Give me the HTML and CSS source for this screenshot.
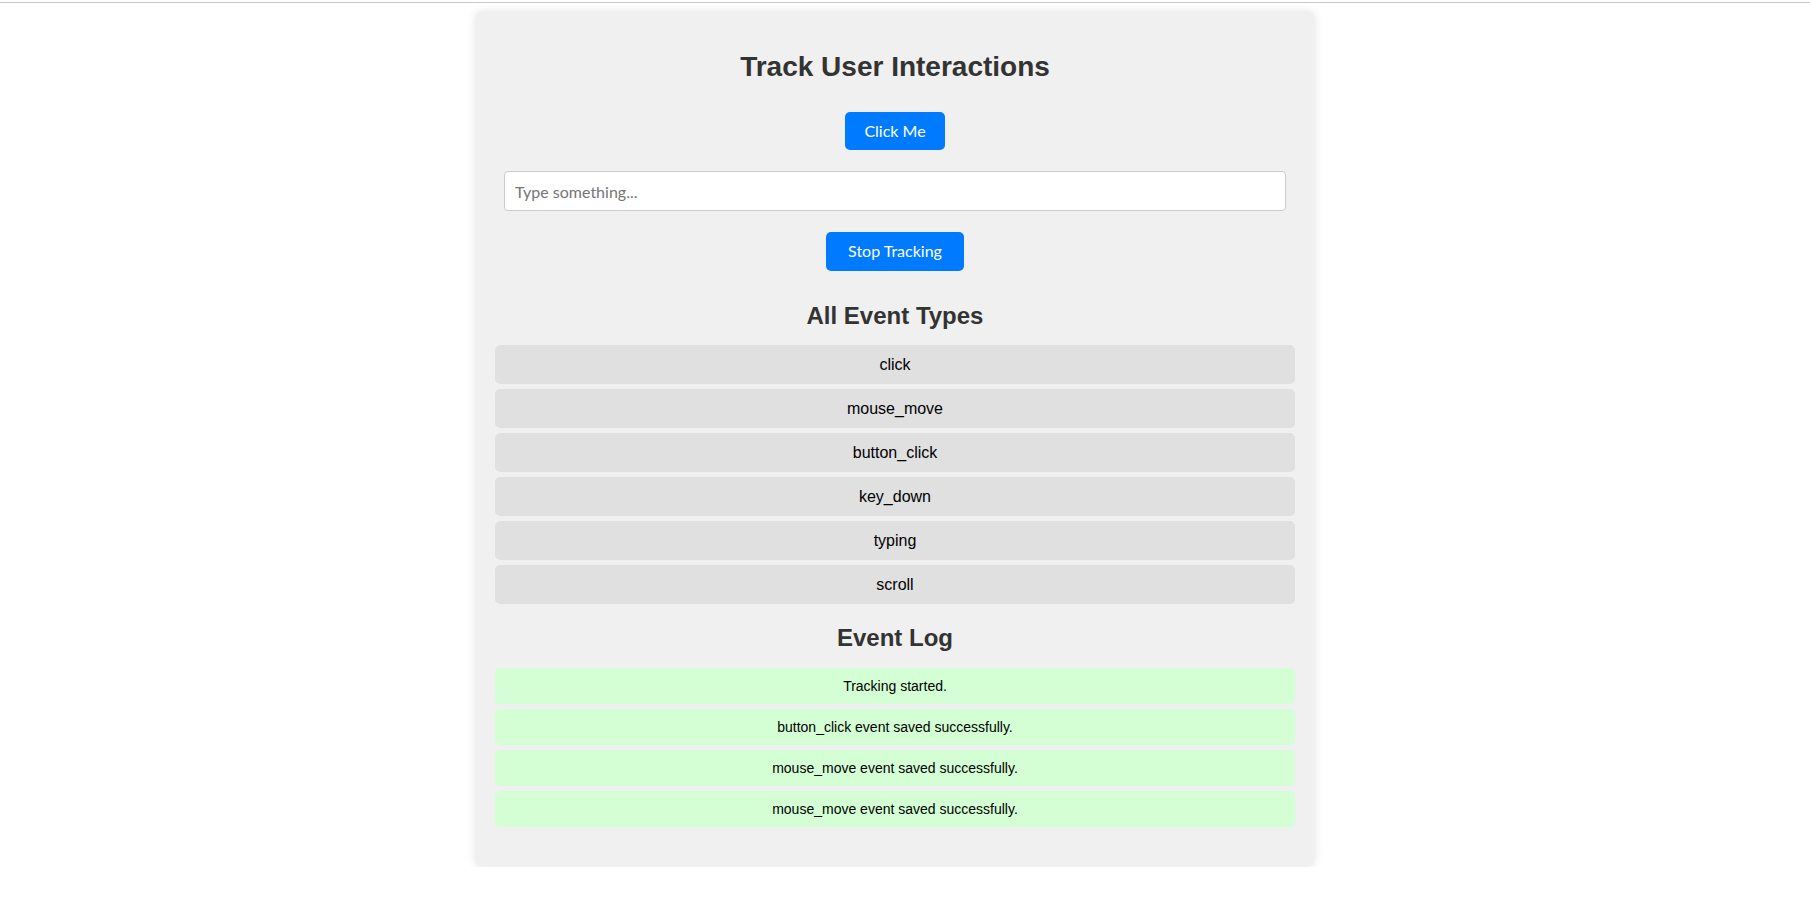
FILE: index.html
```html
<!DOCTYPE html>
<html lang="en">
<head>
<meta charset="utf-8">
<title>Track User Interactions</title>
<link rel="stylesheet" href="styles.css">
</head>
<body>
<div class="topline"></div>
<div class="page">
  <div class="card">
    <h1 class="title">Track User Interactions</h1>
    <button class="btn btn-click" type="button">Click Me</button>
    <input class="text-input" type="text" placeholder="Type something...">
    <button class="btn btn-stop" type="button">Stop Tracking</button>

    <h2 class="section-title section-types">All Event Types</h2>
    <ul class="type-list">
      <li class="type-item">click</li>
      <li class="type-item">mouse_move</li>
      <li class="type-item">button_click</li>
      <li class="type-item">key_down</li>
      <li class="type-item">typing</li>
      <li class="type-item">scroll</li>
    </ul>

    <h2 class="section-title section-log">Event Log</h2>
    <div class="log-list">
      <div class="log-item">Tracking started.</div>
      <div class="log-item">button_click event saved successfully.</div>
      <div class="log-item">mouse_move event saved successfully.</div>
      <div class="log-item">mouse_move event saved successfully.</div>
    </div>
  </div>
</div>
</body>
</html>
```

FILE: styles.css
```css
html, body {
  margin: 0;
  padding: 0;
  background: #ffffff;
}

body {
  font-family: "Liberation Sans", Arial, sans-serif;
  color: #000;
}

.topline {
  margin-top: 2px;
  height: 1px;
  background: #c9c9c9;
}

.page {
  padding-right: 20px;
}

.card {
  width: 800px;
  margin: 8px auto 0;
  padding: 20px 20px 35px;
  background: #f0f0f0;
  border-radius: 8px;
  box-shadow: 0 0 10px rgba(0, 0, 0, 0.1);
}

.title {
  margin: 20px 0 0;
  font-size: 28px;
  line-height: 32px;
  font-weight: bold;
  color: #333333;
  text-align: center;
}

.btn {
  display: block;
  box-sizing: border-box;
  margin: 29px auto 0;
  padding: 10px 0;
  border: none;
  border-radius: 5px;
  background: #007bff;
  color: #ffffff;
  font-family: Lato, "Open Sans", sans-serif;
  font-size: 16px;
  line-height: 18.4px;
  white-space: nowrap;
  text-align: center;
  cursor: pointer;
}

.btn-click {
  width: 100px;
}

.btn-stop {
  width: 138px;
  margin-top: 21px;
}

.text-input {
  display: block;
  box-sizing: border-box;
  width: 782px;
  height: 40px;
  margin: 21px auto 0;
  padding: 10px;
  border: 1px solid #cccccc;
  border-radius: 4px;
  background: #ffffff;
  font-family: Lato, "Open Sans", sans-serif;
  font-size: 16px;
  color: #333;
}

.text-input::placeholder {
  color: #757575;
}

.section-title {
  margin: 0;
  font-size: 24px;
  line-height: 27.6px;
  font-weight: bold;
  color: #333333;
  text-align: center;
}

.section-types {
  margin-top: 31px;
}

.section-log {
  margin-top: 20px;
}

.type-list {
  list-style: none;
  margin: 16px 0 0;
  padding: 0;
}

.type-item {
  margin-bottom: 5px;
  padding: 10px;
  line-height: 19px;
  font-size: 16px;
  background: #e0e0e0;
  border-radius: 5px;
  text-align: center;
}

.log-list {
  margin-top: 16px;
}

.log-item {
  margin-bottom: 5px;
  padding: 10px;
  line-height: 16px;
  font-size: 14px;
  background: #d4ffd4;
  border-radius: 5px;
  text-align: center;
}
```
